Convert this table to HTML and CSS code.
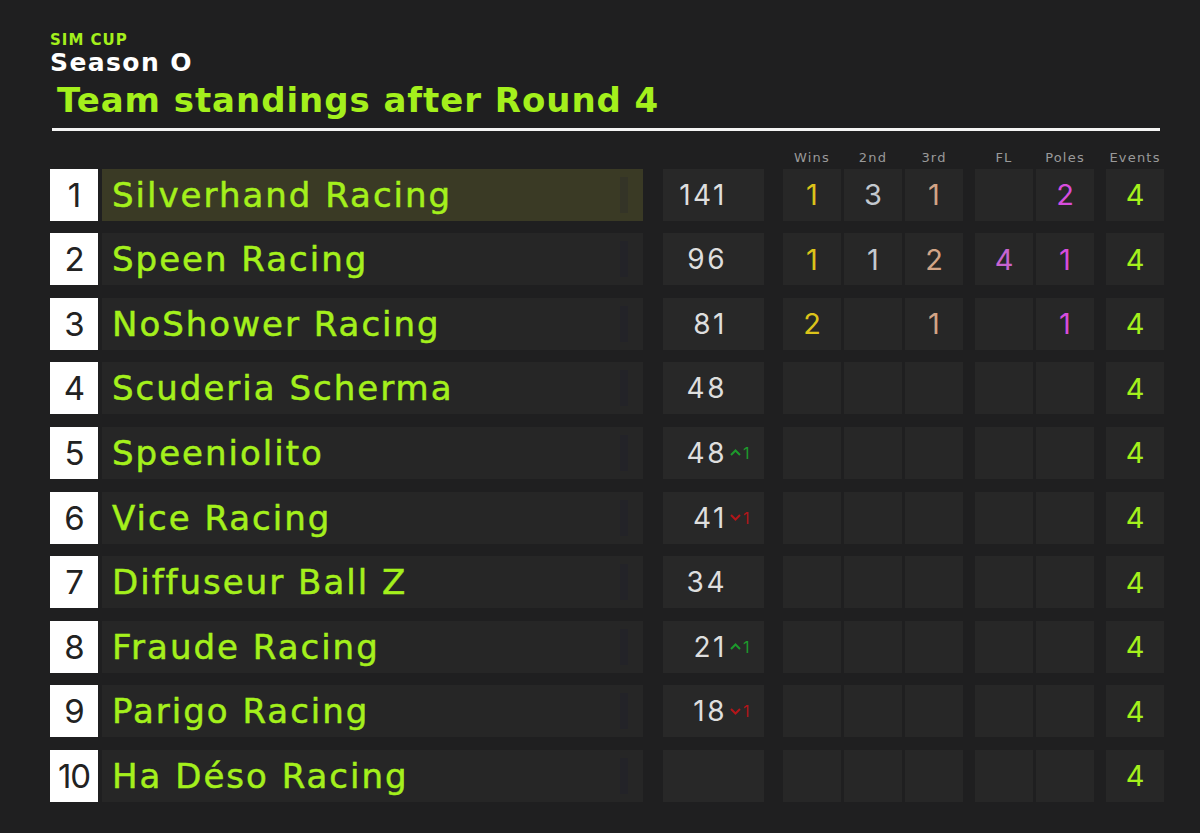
FILE: index.html
```html
<!DOCTYPE html>
<html lang="en">
<head>
<meta charset="utf-8">
<title>Sim Cup – Team standings</title>
<link rel="stylesheet" href="styles.css">
</head>
<body>
<div class="page">
  <header class="head">
    <div class="brand">SIM CUP</div>
    <div class="season">Season O</div>
    <h1 class="title">Team standings after Round 4</h1>
    <div class="rule"></div>
  </header>

  <div class="table">
    <div class="row labels">
      <div class="c-rank blank"></div>
      <div class="c-name blank"></div>
      <div class="c-pts blank"></div>
      <div class="stat first">Wins</div>
      <div class="stat g3">2nd</div>
      <div class="stat g3">3rd</div>
      <div class="stat g12">FL</div>
      <div class="stat g3">Poles</div>
      <div class="stat g12">Events</div>
    </div>

    <div class="row">
      <div class="c-rank">1</div>
      <div class="c-name hl"><span class="team">Silverhand Racing</span><span class="bar"></span></div>
      <div class="c-pts"><span class="num">141</span><span class="trend"></span></div>
      <div class="stat first cell gold">1</div>
      <div class="stat g3 cell silver">3</div>
      <div class="stat g3 cell bronze">1</div>
      <div class="stat g12 cell"></div>
      <div class="stat g3 cell pole">2</div>
      <div class="stat g12 cell ev">4</div>
    </div>

    <div class="row">
      <div class="c-rank">2</div>
      <div class="c-name"><span class="team">Speen Racing</span><span class="bar"></span></div>
      <div class="c-pts"><span class="num">96</span><span class="trend"></span></div>
      <div class="stat first cell gold">1</div>
      <div class="stat g3 cell silver">1</div>
      <div class="stat g3 cell bronze">2</div>
      <div class="stat g12 cell fl">4</div>
      <div class="stat g3 cell pole">1</div>
      <div class="stat g12 cell ev">4</div>
    </div>

    <div class="row">
      <div class="c-rank">3</div>
      <div class="c-name"><span class="team">NoShower Racing</span><span class="bar"></span></div>
      <div class="c-pts"><span class="num">81</span><span class="trend"></span></div>
      <div class="stat first cell gold">2</div>
      <div class="stat g3 cell silver"></div>
      <div class="stat g3 cell bronze">1</div>
      <div class="stat g12 cell"></div>
      <div class="stat g3 cell pole">1</div>
      <div class="stat g12 cell ev">4</div>
    </div>

    <div class="row">
      <div class="c-rank">4</div>
      <div class="c-name"><span class="team">Scuderia Scherma</span><span class="bar"></span></div>
      <div class="c-pts"><span class="num">48</span><span class="trend"></span></div>
      <div class="stat first cell"></div>
      <div class="stat g3 cell"></div>
      <div class="stat g3 cell"></div>
      <div class="stat g12 cell"></div>
      <div class="stat g3 cell"></div>
      <div class="stat g12 cell ev">4</div>
    </div>

    <div class="row">
      <div class="c-rank">5</div>
      <div class="c-name"><span class="team">Speeniolito</span><span class="bar"></span></div>
      <div class="c-pts"><span class="num">48</span><span class="trend up"><svg viewBox="0 0 11 7" width="11" height="7"><polyline points="1,6 5.5,1.5 10,6" fill="none" stroke="currentColor" stroke-width="2"/></svg>1</span></div>
      <div class="stat first cell"></div>
      <div class="stat g3 cell"></div>
      <div class="stat g3 cell"></div>
      <div class="stat g12 cell"></div>
      <div class="stat g3 cell"></div>
      <div class="stat g12 cell ev">4</div>
    </div>

    <div class="row">
      <div class="c-rank">6</div>
      <div class="c-name"><span class="team">Vice Racing</span><span class="bar"></span></div>
      <div class="c-pts"><span class="num">41</span><span class="trend down"><svg viewBox="0 0 11 7" width="11" height="7"><polyline points="1,1 5.5,5.5 10,1" fill="none" stroke="currentColor" stroke-width="2"/></svg>1</span></div>
      <div class="stat first cell"></div>
      <div class="stat g3 cell"></div>
      <div class="stat g3 cell"></div>
      <div class="stat g12 cell"></div>
      <div class="stat g3 cell"></div>
      <div class="stat g12 cell ev">4</div>
    </div>

    <div class="row">
      <div class="c-rank">7</div>
      <div class="c-name"><span class="team">Diffuseur Ball Z</span><span class="bar"></span></div>
      <div class="c-pts"><span class="num">34</span><span class="trend"></span></div>
      <div class="stat first cell"></div>
      <div class="stat g3 cell"></div>
      <div class="stat g3 cell"></div>
      <div class="stat g12 cell"></div>
      <div class="stat g3 cell"></div>
      <div class="stat g12 cell ev">4</div>
    </div>

    <div class="row">
      <div class="c-rank">8</div>
      <div class="c-name"><span class="team">Fraude Racing</span><span class="bar"></span></div>
      <div class="c-pts"><span class="num">21</span><span class="trend up"><svg viewBox="0 0 11 7" width="11" height="7"><polyline points="1,6 5.5,1.5 10,6" fill="none" stroke="currentColor" stroke-width="2"/></svg>1</span></div>
      <div class="stat first cell"></div>
      <div class="stat g3 cell"></div>
      <div class="stat g3 cell"></div>
      <div class="stat g12 cell"></div>
      <div class="stat g3 cell"></div>
      <div class="stat g12 cell ev">4</div>
    </div>

    <div class="row">
      <div class="c-rank">9</div>
      <div class="c-name"><span class="team">Parigo Racing</span><span class="bar"></span></div>
      <div class="c-pts"><span class="num">18</span><span class="trend down"><svg viewBox="0 0 11 7" width="11" height="7"><polyline points="1,1 5.5,5.5 10,1" fill="none" stroke="currentColor" stroke-width="2"/></svg>1</span></div>
      <div class="stat first cell"></div>
      <div class="stat g3 cell"></div>
      <div class="stat g3 cell"></div>
      <div class="stat g12 cell"></div>
      <div class="stat g3 cell"></div>
      <div class="stat g12 cell ev">4</div>
    </div>

    <div class="row">
      <div class="c-rank">10</div>
      <div class="c-name"><span class="team">Ha Déso Racing</span><span class="bar"></span></div>
      <div class="c-pts"><span class="num"></span><span class="trend"></span></div>
      <div class="stat first cell"></div>
      <div class="stat g3 cell"></div>
      <div class="stat g3 cell"></div>
      <div class="stat g12 cell"></div>
      <div class="stat g3 cell"></div>
      <div class="stat g12 cell ev">4</div>
    </div>
  </div>
</div>
</body>
</html>
```

FILE: styles.css
```css
html, body {
  margin: 0;
  padding: 0;
  background: #1f1f20;
}
body {
  width: 1200px;
  height: 833px;
  overflow: hidden;
  font-family: "DejaVu Sans", sans-serif;
}
.page {
  padding: 32px 0 0 50px;
}
.head {
  width: 1110px;
}
.brand {
  font-weight: bold;
  font-size: 15px;
  line-height: 17px;
  letter-spacing: 1px;
  color: #a4f01c;
}
.season {
  font-weight: bold;
  font-size: 25px;
  line-height: 27px;
  letter-spacing: 1.4px;
  color: #ffffff;
}
.title {
  margin: 3px 0 0 7px;
  font-weight: bold;
  font-size: 34px;
  line-height: 42px;
  letter-spacing: 0.95px;
  color: #a4f01c;
}
.rule {
  margin: 7px 0 0 2px;
  height: 3px;
  width: 1108px;
  background: #f4f4f4;
}
.table {
  margin-top: 19px;
  display: flex;
  flex-direction: column;
  gap: 12.6px;
}
.row {
  display: flex;
  height: 52px;
}
.row.labels {
  height: 20px;
  margin-bottom: -14px;
}
.labels .stat {
  background: none;
  font-family: "DejaVu Sans", sans-serif;
  font-size: 13px;
  letter-spacing: 1.2px;
  color: #9a9a9a;
  align-items: flex-start;
}
.blank {
  background: none !important;
}
.c-rank {
  width: 48px;
  background: #ffffff;
  color: #222222;
  font-family: Inter, sans-serif;
  font-size: 33px;
  display: flex;
  align-items: center;
  justify-content: center;
  letter-spacing: -1px;
}
.c-name {
  width: 541px;
  margin-left: 4px;
  background: #262626;
  display: flex;
  align-items: center;
  padding-left: 10px;
  box-sizing: border-box;
}
.c-name.hl {
  background: #3a3a25;
}
.team {
  flex: 1;
  font-size: 34px;
  letter-spacing: 2px;
  color: #a4f01c;
  -webkit-text-stroke: 0.5px #a4f01c;
  white-space: nowrap;
}
.bar {
  width: 8px;
  height: 36px;
  margin-right: 15px;
  background: rgba(20, 20, 60, 0.14);
}
.c-pts {
  width: 101px;
  margin-left: 20px;
  background: #282828;
  display: flex;
  align-items: center;
  justify-content: flex-end;
}
.num {
  font-family: Inter, sans-serif;
  font-size: 28px;
  letter-spacing: 2.5px;
  color: #dedede;
}
.trend {
  width: 34px;
  margin-left: 3px;
  font-family: Inter, sans-serif;
  font-size: 16px;
  display: flex;
  align-items: center;
  gap: 2px;
}
.trend.up { color: #1d9a2c; }
.trend.down { color: #b3161a; }
.stat {
  width: 58px;
  display: flex;
  align-items: center;
  justify-content: center;
  font-family: Inter, sans-serif;
  font-size: 29px;
}
.cell {
  background: #272727;
}
.first { margin-left: 19px; }
.g3 { margin-left: 3px; }
.g12 { margin-left: 12px; }
.gold { color: #dcc31a; }
.silver { color: #c3c9cf; }
.bronze { color: #d2a486; }
.fl { color: #c864cf; }
.pole { color: #d74ddd; }
.ev { color: #a4f01c; }
```
